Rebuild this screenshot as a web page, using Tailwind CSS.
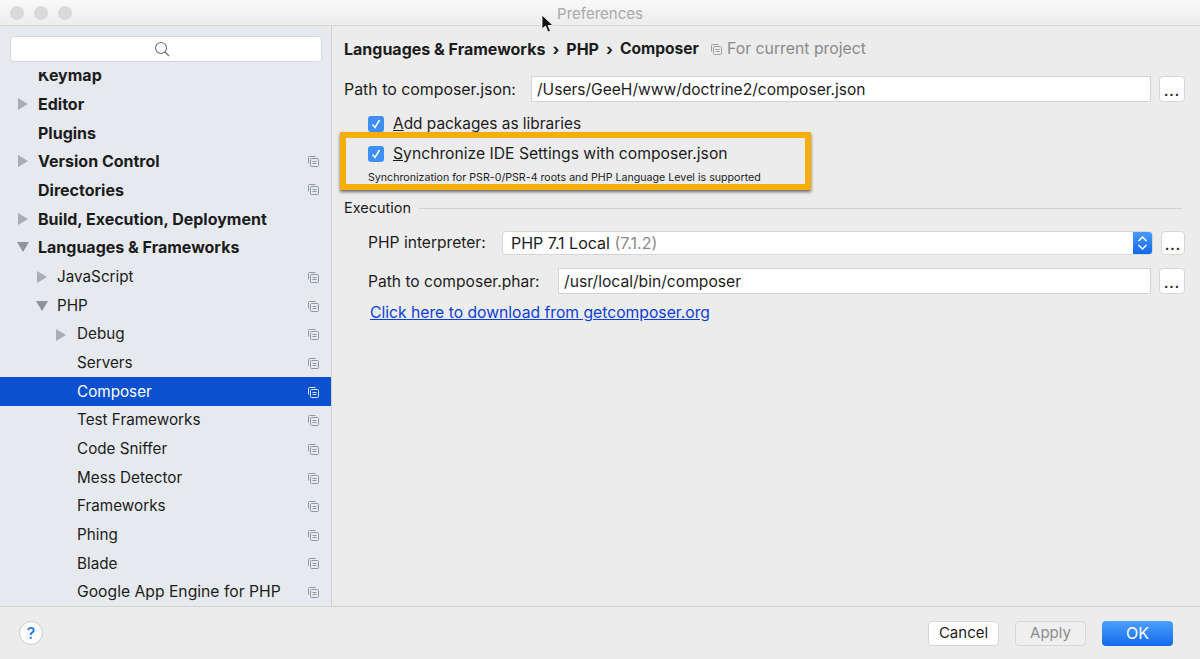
<!DOCTYPE html>
<html lang="en">
<head>
    <meta charset="UTF-8">
    <title>Preferences</title>
    <script src="https://cdn.jsdelivr.net/npm/@tailwindcss/browser@4"></script>
</head>
<body class="bg-[#ececec] font-[Inter,sans-serif] text-[15.7px] text-[#1c1c1c] overflow-hidden">
    <svg class="hidden">
        <symbol id="copy" viewBox="0 0 11 11">
            <path d="M0.5 7.5V1.5a1 1 0 0 1 1-1h6" fill="none" stroke="currentColor" stroke-width="1"></path>
            <rect x="2.5" y="2.5" width="8" height="8" rx="1" fill="none" stroke="currentColor" stroke-width="1"></rect>
            <path d="M4.5 5.5h4M4.5 7.5h4" stroke="currentColor" stroke-width="1"></path>
        </symbol>
        <symbol id="arrow" viewBox="0 0 10 12">
            <path d="M0 0L10 6L0 12Z" fill="currentColor"></path>
        </symbol>
        <symbol id="arrow-down" viewBox="0 0 12 10">
            <path d="M0 0H12L6 10Z" fill="currentColor"></path>
        </symbol>
    </svg>

    <div class="h-[659px] w-[1200px] flex flex-col relative">
        <!-- title bar -->
        <div class="h-[26px] flex-none relative flex items-center justify-center bg-gradient-to-b from-[#f8f8f8] to-[#ededed] border-b border-[#d6d6d6]">
            <div class="absolute left-[10px] top-[6px] flex gap-[10px]">
                <div class="w-[14px] h-[14px] rounded-full bg-[#d9d9d9]"></div>
                <div class="w-[14px] h-[14px] rounded-full bg-[#d9d9d9]"></div>
                <div class="w-[14px] h-[14px] rounded-full bg-[#d9d9d9]"></div>
            </div>
            <span class="text-[#a8a8a8] text-[15px] pt-[3px]">Preferences</span>
        </div>

        <div class="flex-1 flex min-h-0">
            <!-- sidebar -->
            <div class="w-[332px] flex-none bg-[#e6eaef] border-r border-[#d3d3d3] flex flex-col text-[15.25px]">
                <div class="h-[46px] flex-none px-[10px] pt-[10px]">
                    <div class="h-[26px] w-[312px] bg-white border border-[#d6d8da] rounded-[4px] flex items-center justify-center pr-[8px]">
                        <svg class="w-[16px] h-[16px] text-[#6e6e6e]" viewBox="0 0 16 16" fill="none" stroke="currentColor" stroke-width="1.1">
                            <circle cx="7" cy="7" r="5.5"></circle>
                            <path d="M11 11l4 4"></path>
                        </svg>
                    </div>
                </div>
                <div class="flex-1 overflow-hidden">
                    <div class="-mt-[11px]">
                        <div class="h-[28.67px] flex items-center pl-[38px] font-bold text-[16px]">Keymap</div>
                        <div class="h-[28.67px] flex items-center pl-[18px] font-bold text-[16px]"><svg class="w-[10px] h-[12px] text-[#a9adb1] mr-[10px]"><use href="#arrow"></use></svg>Editor</div>
                        <div class="h-[28.67px] flex items-center pl-[38px] font-bold text-[16px]">Plugins</div>
                        <div class="h-[28.67px] flex items-center pl-[18px] pr-[12px] font-bold text-[16px]"><svg class="w-[10px] h-[12px] text-[#a9adb1] mr-[10px]"><use href="#arrow"></use></svg>Version Control<svg class="ml-auto w-[11px] h-[11px] text-[#8c98a3]"><use href="#copy"></use></svg></div>
                        <div class="h-[28.67px] flex items-center pl-[38px] pr-[12px] font-bold text-[16px]">Directories<svg class="ml-auto w-[11px] h-[11px] text-[#8c98a3]"><use href="#copy"></use></svg></div>
                        <div class="h-[28.67px] flex items-center pl-[18px] font-bold text-[16px]"><svg class="w-[10px] h-[12px] text-[#a9adb1] mr-[10px]"><use href="#arrow"></use></svg>Build, Execution, Deployment</div>
                        <div class="h-[28.67px] flex items-center pl-[17px] font-bold text-[16px]"><svg class="w-[12px] h-[10px] text-[#8f9397] mr-[9px]"><use href="#arrow-down"></use></svg>Languages &amp; Frameworks</div>
                        <div class="mt-[1px] h-[28.67px] flex items-center pt-[1px] pl-[37px] pr-[12px]"><svg class="w-[10px] h-[12px] text-[#a9adb1] mr-[10px]"><use href="#arrow"></use></svg>JavaScript<svg class="ml-auto w-[11px] h-[11px] text-[#8c98a3]"><use href="#copy"></use></svg></div>
                        <div class="h-[28.67px] flex items-center pt-[1px] pl-[36px] pr-[12px]"><svg class="w-[12px] h-[10px] text-[#8f9397] mr-[9px]"><use href="#arrow-down"></use></svg>PHP<svg class="ml-auto w-[11px] h-[11px] text-[#8c98a3]"><use href="#copy"></use></svg></div>
                        <div class="h-[28.67px] flex items-center pt-[1px] pl-[56px] pr-[12px]"><svg class="w-[10px] h-[12px] text-[#a9adb1] mr-[11px]"><use href="#arrow"></use></svg>Debug<svg class="ml-auto w-[11px] h-[11px] text-[#8c98a3]"><use href="#copy"></use></svg></div>
                        <div class="h-[28.67px] flex items-center pt-[1px] pl-[77px] pr-[12px]">Servers<svg class="ml-auto w-[11px] h-[11px] text-[#8c98a3]"><use href="#copy"></use></svg></div>
                        <div class="h-[28.67px] flex items-center pt-[1px] pl-[77px] pr-[12px] bg-[#0a50cf] text-white">Composer<svg class="ml-auto w-[11px] h-[11px] text-[#dfe8f8]"><use href="#copy"></use></svg></div>
                        <div class="h-[28.67px] flex items-center pt-[1px] pl-[77px] pr-[12px]">Test Frameworks<svg class="ml-auto w-[11px] h-[11px] text-[#8c98a3]"><use href="#copy"></use></svg></div>
                        <div class="h-[28.67px] flex items-center pt-[1px] pl-[77px] pr-[12px]">Code Sniffer<svg class="ml-auto w-[11px] h-[11px] text-[#8c98a3]"><use href="#copy"></use></svg></div>
                        <div class="h-[28.67px] flex items-center pt-[1px] pl-[77px] pr-[12px]">Mess Detector<svg class="ml-auto w-[11px] h-[11px] text-[#8c98a3]"><use href="#copy"></use></svg></div>
                        <div class="h-[28.67px] flex items-center pt-[1px] pl-[77px] pr-[12px]">Frameworks<svg class="ml-auto w-[11px] h-[11px] text-[#8c98a3]"><use href="#copy"></use></svg></div>
                        <div class="h-[28.67px] flex items-center pt-[1px] pl-[77px] pr-[12px]">Phing<svg class="ml-auto w-[11px] h-[11px] text-[#8c98a3]"><use href="#copy"></use></svg></div>
                        <div class="h-[28.67px] flex items-center pt-[1px] pl-[77px] pr-[12px]">Blade<svg class="ml-auto w-[11px] h-[11px] text-[#8c98a3]"><use href="#copy"></use></svg></div>
                        <div class="h-[28.67px] flex items-center pl-[77px] pr-[12px] text-[15.7px]">Google App Engine for PHP<svg class="ml-auto w-[11px] h-[11px] text-[#8c98a3]"><use href="#copy"></use></svg></div>
                    </div>
                </div>
            </div>

            <!-- settings panel -->
            <div class="flex-1 pl-[12px] pr-[15px] min-w-0">
                <div class="h-[46px] flex items-center font-bold text-[16px]">
                    <span>Languages &amp; Frameworks</span>
                    <span class="mx-[7px]">›</span>
                    <span>PHP</span>
                    <span class="mx-[7px]">›</span>
                    <span class="text-[15.6px]">Composer</span>
                    <svg class="ml-[12px] mr-[5px] w-[11px] h-[11px] text-[#9aa0a6]"><use href="#copy"></use></svg>
                    <span class="font-normal text-[#8a8a8a] text-[15.8px]">For current project</span>
                </div>

                <div class="h-[26px] mt-[4px] flex items-center">
                    <span class="w-[187px] flex-none text-[15.9px] pt-[1px]">Path to composer.json:</span>
                    <div class="h-[26px] w-[620px] bg-white border border-[#d2d2d2] pl-[5px] pt-[1px] flex items-center text-[15.55px]">/Users/GeeH/www/doctrine2/composer.json</div>
                    <div class="ml-[8px] h-[26px] w-[26px] bg-white border border-[#d6d6d6] rounded-[4px] flex items-center justify-center font-bold text-[13px] leading-none pt-[4px] tracking-[1px]">...</div>
                </div>

                <div class="h-[22px] mt-[11px] ml-[24px] flex items-center gap-[9px]">
                    <div class="w-[16px] h-[16px] rounded-[3px] bg-[#3d8ef5] flex items-center justify-center">
                        <svg class="w-[10px] h-[10px]" viewBox="0 0 10 10" fill="none" stroke="white" stroke-width="1.5"><path d="M1.5 5.5L4 8.5L8.5 1"></path></svg>
                    </div>
                    <span class="text-[15.4px]"><span class="underline">A</span>dd packages as libraries</span>
                </div>

                <!-- annotation box -->
                <div class="-ml-[4px] mt-[-3px] w-[471px] h-[58px] border-[6px] border-[#f5ae0c] shadow-[0_2px_3px_rgba(0,0,0,0.55)] pl-[22px] pt-[5px]">
                    <div class="h-[22px] flex items-center gap-[9px]">
                        <div class="w-[16px] h-[16px] rounded-[3px] bg-[#3d8ef5] flex items-center justify-center">
                            <svg class="w-[10px] h-[10px]" viewBox="0 0 10 10" fill="none" stroke="white" stroke-width="1.5"><path d="M1.5 5.5L4 8.5L8.5 1"></path></svg>
                        </div>
                        <span><span class="underline">S</span>ynchronize IDE Settings with composer.json</span>
                    </div>
                    <div class="text-[10.66px] mt-[6px] leading-[14px]">Synchronization for PSR-0/PSR-4 roots and PHP Language Level is supported</div>
                </div>

                <div class="mt-[8px] h-[20px] flex items-center text-[14.5px]">
                    <span>Execution</span>
                    <div class="flex-1 ml-[8px] mr-[3px] border-t border-[#d2d2d2]"></div>
                </div>

                <div class="mt-[13px] ml-[24px] h-[24px] flex items-center">
                    <span class="w-[134px] flex-none text-[15.6px]">PHP interpreter:</span>
                    <div class="h-[24px] w-[652px] bg-white border border-[#d6d6d6] rounded-[4px] flex items-center pl-[8px] relative overflow-hidden text-[16px]">
                        PHP 7.1 Local&nbsp;<span class="text-[#8a8a8a]">(7.1.2)</span>
                        <div class="absolute right-0 top-0 bottom-0 w-[19px] bg-gradient-to-b from-[#4a9bf8] to-[#0e68ee] flex items-center justify-center">
                            <svg class="w-[11px] h-[16px]" viewBox="0 0 11 16" fill="none" stroke="white" stroke-width="1.5"><path d="M1.5 6L5.5 2L9.5 6M1.5 10L5.5 14L9.5 10"></path></svg>
                        </div>
                    </div>
                    <div class="ml-[8px] h-[24px] w-[24px] bg-white border border-[#d6d6d6] rounded-[4px] flex items-center justify-center font-bold text-[13px] leading-none pt-[4px] tracking-[1px]">...</div>
                </div>

                <div class="mt-[13px] ml-[24px] h-[26px] flex items-center">
                    <span class="w-[190px] flex-none text-[15.6px] pt-[1px]">Path to composer.phar:</span>
                    <div class="h-[26px] w-[593px] bg-white border border-[#d2d2d2] pl-[5px] pt-[1px] flex items-center text-[15.65px]">/usr/local/bin/composer</div>
                    <div class="ml-[8px] h-[26px] w-[26px] bg-white border border-[#d6d6d6] rounded-[4px] flex items-center justify-center font-bold text-[13px] leading-none pt-[4px] tracking-[1px]">...</div>
                </div>

                <a class="block mt-[7px] ml-[26px] text-[#0b3fd6] underline">Click here to download from getcomposer.org</a>
            </div>
        </div>

        <!-- footer -->
        <div class="h-[53px] flex-none bg-[#ececec] border-t border-[#d2d2d2] flex items-center pl-[19px] pr-[27px] text-[15px]">
            <div class="w-[24px] h-[24px] rounded-full bg-white border border-[#c9c9c9] flex items-center justify-center text-[#1a73f0] font-medium text-[16px]">?</div>
            <div class="ml-auto w-[71px] h-[25px] bg-white border border-[#d6d6d6] rounded-[4px] flex items-center justify-center">Cancel</div>
            <div class="ml-[16px] w-[71px] h-[25px] bg-[#efefef] border border-[#d6d6d6] rounded-[4px] flex items-center justify-center text-[#8e8e8e]">Apply</div>
            <div class="ml-[16px] w-[71px] h-[25px] bg-gradient-to-b from-[#4ea0f9] to-[#0f68ee] rounded-[4px] flex items-center justify-center text-white text-[16px]">OK</div>
        </div>

        <!-- mouse pointer -->
        <svg class="absolute left-[541px] top-[14px] w-[13px] h-[20px]" viewBox="0 0 13 20">
            <path d="M1 1V15L4.5 12L7 18L9.5 17L7 11.5H12Z" fill="#111" stroke="#fff" stroke-width="0.8"></path>
        </svg>
    </div>
</body>
</html>
